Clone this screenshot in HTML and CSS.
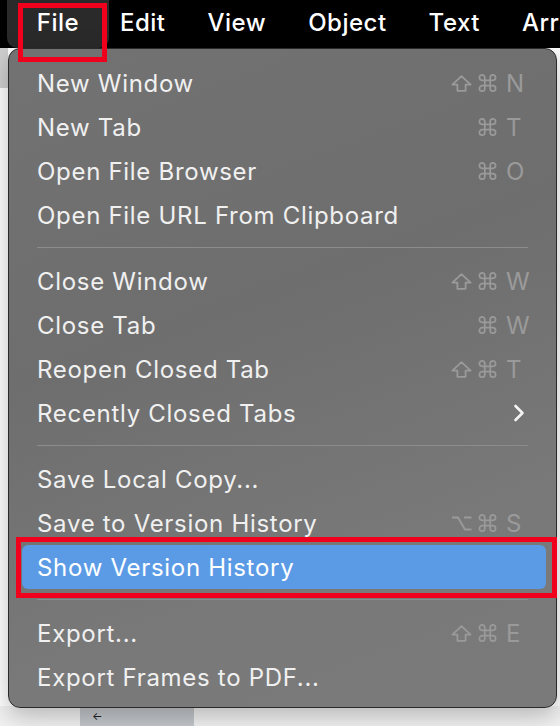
FILE: index.html
```html
<!DOCTYPE html>
<html>
<head>
<meta charset="utf-8">
<link rel="stylesheet" href="styles.css">
</head>
<body>
<div class="menubar">
  <div class="mb-item active"><span>File</span></div>
  <div class="mb-item first">Edit</div>
  <div class="mb-item">View</div>
  <div class="mb-item">Object</div>
  <div class="mb-item">Text</div>
  <div class="mb-item">Arrange</div>
</div>
<div class="stage">
  <div class="bg-left"></div>
  <div class="bg-bottom"><div class="back-btn">&#8592;</div></div>
  <div class="menu">
    <div class="row"><span class="label">New Window</span><span class="sc"><svg class="k-shift" width="21" height="17" viewBox="0 0 21 17"><path d="M10.5 1.2 L19.6 9.6 H14.6 V15.8 H6.4 V9.6 H1.4 Z" fill="none" stroke="currentColor" stroke-width="1.8" stroke-linejoin="round"/></svg><svg class="k-cmd" width="19" height="18" viewBox="2 2 20 20"><path d="M15 6v12a3 3 0 1 0 3-3H6a3 3 0 1 0 3 3V6a3 3 0 1 0-3 3h12a3 3 0 1 0-3-3" fill="none" stroke="currentColor" stroke-width="1.9"/></svg><b>N</b></span></div>
    <div class="row"><span class="label">New Tab</span><span class="sc"><span class="k-empty"></span><svg class="k-cmd" width="19" height="18" viewBox="2 2 20 20"><path d="M15 6v12a3 3 0 1 0 3-3H6a3 3 0 1 0 3 3V6a3 3 0 1 0-3 3h12a3 3 0 1 0-3-3" fill="none" stroke="currentColor" stroke-width="1.9"/></svg><b>T</b></span></div>
    <div class="row"><span class="label">Open File Browser</span><span class="sc"><span class="k-empty"></span><svg class="k-cmd" width="19" height="18" viewBox="2 2 20 20"><path d="M15 6v12a3 3 0 1 0 3-3H6a3 3 0 1 0 3 3V6a3 3 0 1 0-3 3h12a3 3 0 1 0-3-3" fill="none" stroke="currentColor" stroke-width="1.9"/></svg><b>O</b></span></div>
    <div class="row"><span class="label">Open File URL From Clipboard</span></div>
    <div class="sep"></div>
    <div class="row"><span class="label">Close Window</span><span class="sc"><svg class="k-shift" width="21" height="17" viewBox="0 0 21 17"><path d="M10.5 1.2 L19.6 9.6 H14.6 V15.8 H6.4 V9.6 H1.4 Z" fill="none" stroke="currentColor" stroke-width="1.8" stroke-linejoin="round"/></svg><svg class="k-cmd" width="19" height="18" viewBox="2 2 20 20"><path d="M15 6v12a3 3 0 1 0 3-3H6a3 3 0 1 0 3 3V6a3 3 0 1 0-3 3h12a3 3 0 1 0-3-3" fill="none" stroke="currentColor" stroke-width="1.9"/></svg><b>W</b></span></div>
    <div class="row"><span class="label">Close Tab</span><span class="sc"><span class="k-empty"></span><svg class="k-cmd" width="19" height="18" viewBox="2 2 20 20"><path d="M15 6v12a3 3 0 1 0 3-3H6a3 3 0 1 0 3 3V6a3 3 0 1 0-3 3h12a3 3 0 1 0-3-3" fill="none" stroke="currentColor" stroke-width="1.9"/></svg><b>W</b></span></div>
    <div class="row"><span class="label">Reopen Closed Tab</span><span class="sc"><svg class="k-shift" width="21" height="17" viewBox="0 0 21 17"><path d="M10.5 1.2 L19.6 9.6 H14.6 V15.8 H6.4 V9.6 H1.4 Z" fill="none" stroke="currentColor" stroke-width="1.8" stroke-linejoin="round"/></svg><svg class="k-cmd" width="19" height="18" viewBox="2 2 20 20"><path d="M15 6v12a3 3 0 1 0 3-3H6a3 3 0 1 0 3 3V6a3 3 0 1 0-3 3h12a3 3 0 1 0-3-3" fill="none" stroke="currentColor" stroke-width="1.9"/></svg><b>T</b></span></div>
    <div class="row"><span class="label">Recently Closed Tabs</span><svg class="chev" width="12" height="18" viewBox="0 0 12 18"><path d="M2.5 2 L9.5 9 L2.5 16" fill="none" stroke="#f4f4f4" stroke-width="2.6" stroke-linecap="round" stroke-linejoin="round"/></svg></div>
    <div class="sep"></div>
    <div class="row"><span class="label">Save Local Copy...</span></div>
    <div class="row"><span class="label">Save to Version History</span><span class="sc"><svg class="k-opt" width="21" height="17" viewBox="0 0 21 17"><path d="M1 2.5 H7 L14 14.5 H20.5 M13 2.5 H20.5" fill="none" stroke="currentColor" stroke-width="1.9"/></svg><svg class="k-cmd" width="19" height="18" viewBox="2 2 20 20"><path d="M15 6v12a3 3 0 1 0 3-3H6a3 3 0 1 0 3 3V6a3 3 0 1 0-3 3h12a3 3 0 1 0-3-3" fill="none" stroke="currentColor" stroke-width="1.9"/></svg><b>S</b></span></div>
    <div class="row hl-wrap"><div class="hl"><span class="label">Show Version History</span></div></div>
    <div class="sep"></div>
    <div class="row"><span class="label">Export...</span><span class="sc"><svg class="k-shift" width="21" height="17" viewBox="0 0 21 17"><path d="M10.5 1.2 L19.6 9.6 H14.6 V15.8 H6.4 V9.6 H1.4 Z" fill="none" stroke="currentColor" stroke-width="1.8" stroke-linejoin="round"/></svg><svg class="k-cmd" width="19" height="18" viewBox="2 2 20 20"><path d="M15 6v12a3 3 0 1 0 3-3H6a3 3 0 1 0 3 3V6a3 3 0 1 0-3 3h12a3 3 0 1 0-3-3" fill="none" stroke="currentColor" stroke-width="1.9"/></svg><b>E</b></span></div>
    <div class="row"><span class="label">Export Frames to PDF...</span></div>
  </div>
</div>
</body>
</html>
```
FILE: styles.css
```css
* { box-sizing: border-box; }
html, body { margin: 0; padding: 0; }
body {
  width: 560px;
  height: 726px;
  overflow: hidden;
  background: #f4f4f4;
  font-family: Inter, "Noto Sans", sans-serif;
}
.menubar {
  height: 48px;
  width: 560px;
  background: #000;
  display: flex;
  align-items: stretch;
  gap: 42px;
  padding-left: 7px;
  white-space: nowrap;
  overflow-x: clip;
  overflow-y: visible;
}
.mb-item {
  flex-shrink: 0;
  color: #fff;
  font-size: 24px;
  font-weight: 500;
  letter-spacing: 0.5px;
  display: flex;
  align-items: center;
  padding-bottom: 3px;
}
.mb-item.first { margin-left: -31px; }
.mb-item.active {
  background: #2a2a2a;
  border-radius: 0 0 10px 10px;
  width: 102px;
  position: relative;
  justify-content: center;
}
.mb-item.active::after {
  content: "";
  position: absolute;
  left: 11px;
  top: 3px;
  width: 79px;
  height: 49px;
  border: 5px solid #f0001c;
  z-index: 5;
}
.stage {
  position: relative;
  height: 678px;
  background: #ffffff;
}
.bg-left {
  position: absolute;
  left: 0; top: 0;
  width: 8px; height: 40px;
  background: #cfcfcf;
}
.bg-bottom {
  position: absolute;
  left: 0; right: 0; bottom: 0;
  height: 20px;
  background: #f2f2f2;
}
.back-btn {
  position: absolute;
  left: 80px;
  top: 1px;
  width: 114px;
  height: 20px;
  background: #c4c7cb;
  font-size: 11px;
  color: #222;
  padding-left: 12px;
  line-height: 18px;
}
.menu {
  position: absolute;
  left: 8px;
  top: 0;
  width: 549px;
  height: 660px;
  background: linear-gradient(160deg, #727272 0%, #6e6e6e 40%, #797979 75%, #7a7a7a 100%);
  border: 1px solid #2a2a2a;
  border-radius: 12px;
  padding: 12px 0 9px 0;
  box-shadow: 0 8px 24px rgba(0,0,0,0.25);
  display: flex;
  flex-direction: column;
}
.row {
  height: 44px;
  flex-shrink: 0;
  display: flex;
  align-items: center;
  justify-content: space-between;
  padding: 0 25px 0 28px;
  color: #f0f0f0;
  font-size: 24px;
  white-space: nowrap;
}
.label { letter-spacing: 0.7px; }
.sc {
  display: flex;
  align-items: center;
  width: 80px;
  color: #9a9a9a;
  font-size: 24px;
}
.sc svg { display: block; flex-shrink: 0; }
.k-shift, .k-opt, .k-empty { width: 21px; margin-right: 6px; }
.k-empty { display: block; height: 1px; }
.k-cmd { margin-right: 9px; }
.sc b { font-weight: 400; }
.chev { margin-right: 6px; }
.sep {
  height: 1px;
  flex-shrink: 0;
  margin: 10px 28px 11px 28px;
  background: #8c8c8c;
}
.row.hl-wrap {
  padding: 0 10px 0 13px;
  position: relative;
}
.row.hl-wrap::after {
  content: "";
  position: absolute;
  left: 7px; right: -1px;
  top: -8px; bottom: -9px;
  border: 5px solid #f0001c;
}
.hl {
  flex: 1;
  height: 44px;
  background: #5b9be6;
  border-radius: 6px;
  display: flex;
  align-items: center;
  padding-left: 15px;
  color: #ffffff;
}
```
